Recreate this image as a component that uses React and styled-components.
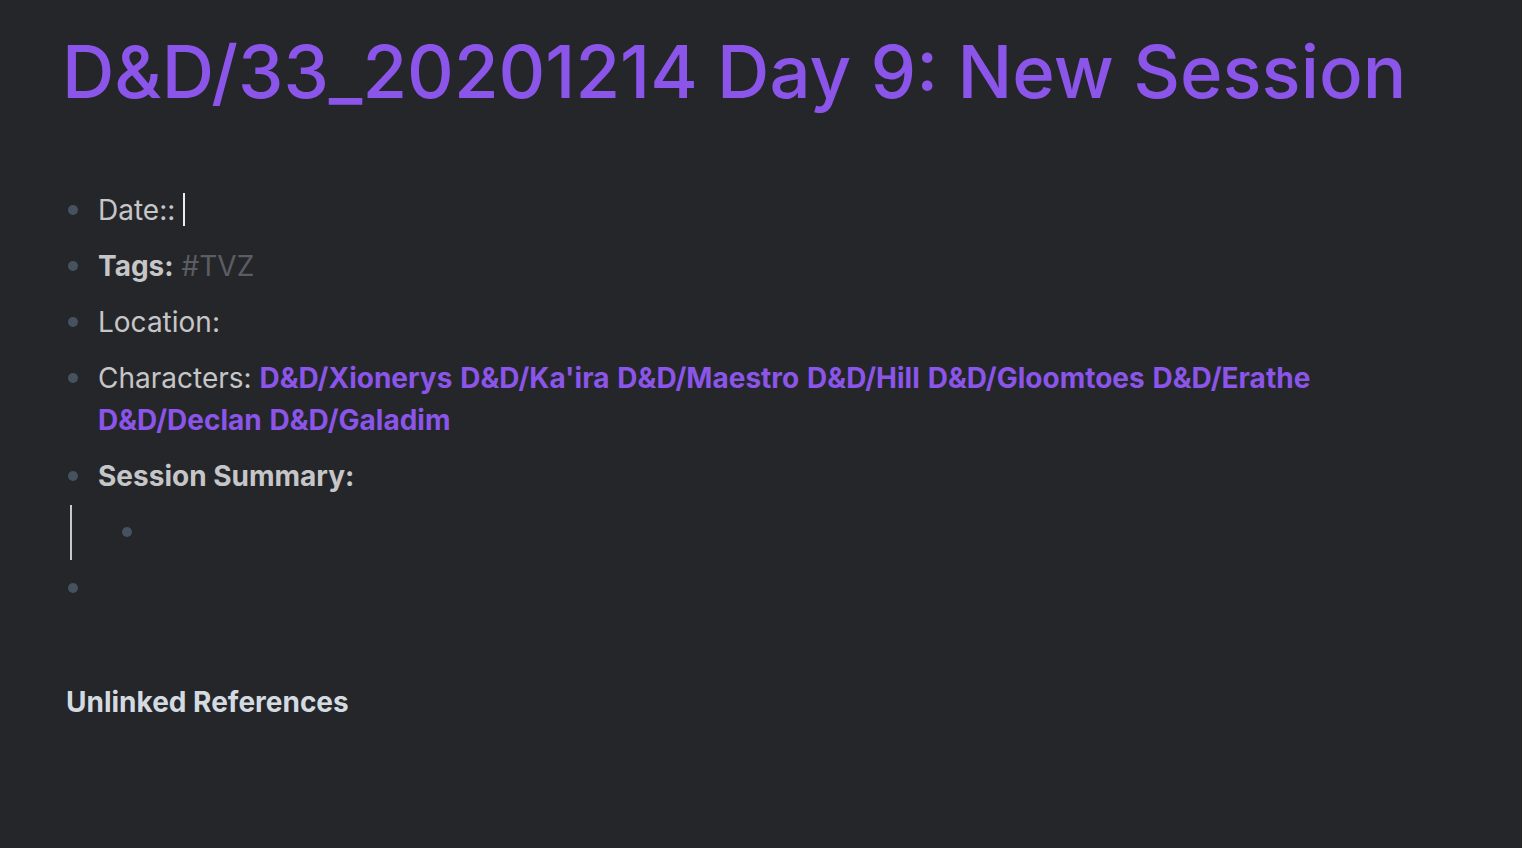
import React from 'react';
import styled, { createGlobalStyle } from 'styled-components';

const Global = createGlobalStyle`
  html, body {
    margin: 0;
    background: #25262a;
  }
  body {
    font-family: Inter, "Noto Sans", sans-serif;
  }
`;

const Page = styled.div`
  min-height: 848px;
  padding: 22px 0 0 62px;
  box-sizing: border-box;
  color: #c6c6c8;
`;

const Title = styled.h1`
  margin: 0;
  font-size: 72.5px;
  font-weight: 500;
  line-height: 100px;
  color: #8b55e9;
`;

const Blocks = styled.div`
  margin-top: 60px;
  width: 1300px;
`;

const Block = styled.div`
  display: flex;
  align-items: flex-start;
  padding: 7px 0;
`;

const BulletCol = styled.div`
  width: 22px;
  height: 42px;
  display: flex;
  align-items: center;
  justify-content: center;
  flex: none;
`;

const Dot = styled.span`
  width: 10px;
  height: 10px;
  border-radius: 50%;
  background: #46525f;
`;

const Text = styled.div`
  margin-left: 14px;
  font-size: 28px;
  line-height: 42px;
  min-height: 42px;
`;

const Bold = styled.b`
  font-weight: 700;
`;

const Tag = styled.span`
  color: #5c5d62;
`;

const Link = styled.span`
  color: #8b55e9;
  font-weight: 700;
`;

const Caret = styled.span`
  display: inline-block;
  width: 2px;
  height: 33px;
  background: #ececec;
  vertical-align: -6px;
  margin-left: 8px;
`;

const Children = styled.div`
  display: flex;
  align-items: center;
  padding-left: 8px;
`;

const Rail = styled.div`
  width: 2px;
  height: 55px;
  background: #c9c9cb;
  flex: none;
`;

const ChildBlock = styled(Block)`
  margin-left: 44px;
`;

const Refs = styled.h3`
  margin: 69px 0 0 4px;
  font-size: 28px;
  font-weight: 700;
  color: #d4dbe0;
`;

const links = ['Xionerys', "Ka'ira", 'Maestro', 'Hill', 'Gloomtoes', 'Erathe', 'Declan', 'Galadim'];

export default function App() {
  return (
    <Page>
      <Global />
      <Title>D&amp;D/33_20201214 Day 9: New Session</Title>
      <Blocks>
        <Block>
          <BulletCol><Dot /></BulletCol>
          <Text>Date::<Caret /></Text>
        </Block>
        <Block>
          <BulletCol><Dot /></BulletCol>
          <Text><Bold>Tags:</Bold> <Tag>#TVZ</Tag></Text>
        </Block>
        <Block>
          <BulletCol><Dot /></BulletCol>
          <Text>Location:</Text>
        </Block>
        <Block>
          <BulletCol><Dot /></BulletCol>
          <Text>
            Characters:{' '}
            {links.map((l, i) => (
              <React.Fragment key={l}>
                <Link>D&amp;D/{l}</Link>{i < links.length - 1 ? ' ' : ''}
              </React.Fragment>
            ))}
          </Text>
        </Block>
        <Block>
          <BulletCol><Dot /></BulletCol>
          <Text><Bold>Session Summary:</Bold></Text>
        </Block>
        <Children>
          <Rail />
          <ChildBlock>
            <BulletCol><Dot /></BulletCol>
          </ChildBlock>
        </Children>
        <Block>
          <BulletCol><Dot /></BulletCol>
        </Block>
      </Blocks>
      <Refs>Unlinked References</Refs>
    </Page>
  );
}
